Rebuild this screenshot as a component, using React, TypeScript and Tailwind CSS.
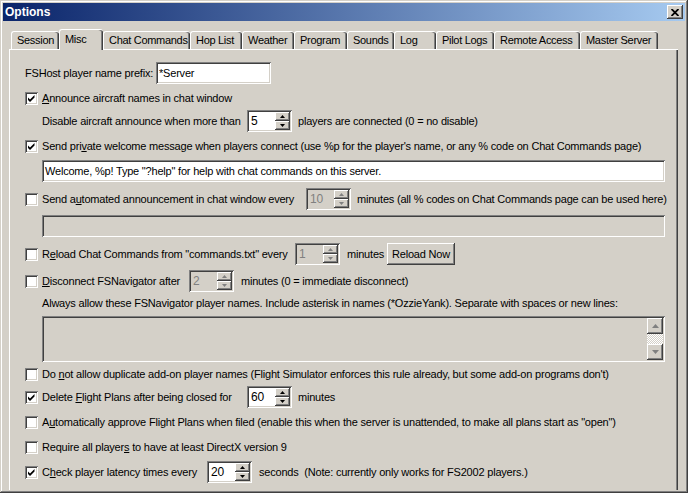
import React from "react";

const sunk =
  "shadow-[inset_1px_1px_#808080,inset_-1px_-1px_#ffffff,inset_2px_2px_#404040,inset_-2px_-2px_#d4d0c8]";
const raised =
  "bg-[#d4d0c8] shadow-[inset_-1px_-1px_#404040,inset_1px_1px_#ffffff,inset_-2px_-2px_#808080,inset_2px_2px_#d4d0c8]";

function Check({ checked }: { checked?: boolean }) {
  return (
    <div className={`w-[13px] h-[13px] shrink-0 bg-white ${sunk}`}>
      {checked && (
        <svg width="13" height="13" viewBox="0 0 13 13">
          <path d="M3 5.5 L5 7.5 L9.5 3 L9.5 5.5 L5 10 L3 8 Z" fill="#000" />
        </svg>
      )}
    </div>
  );
}

function Arrow({ up, disabled, big }: { up?: boolean; disabled?: boolean; big?: boolean }) {
  const c = disabled ? "#808080" : "#000";
  if (big) {
    return (
      <svg width="7" height="4" viewBox="0 0 7 4">
        <path d={up ? "M3.5 0 L7 4 L0 4 Z" : "M0 0 L7 0 L3.5 4 Z"} fill={c} />
      </svg>
    );
  }
  return (
    <svg width="5" height="3" viewBox="0 0 5 3">
      <path d={up ? "M2.5 0 L5 3 L0 3 Z" : "M0 0 L5 0 L2.5 3 Z"} fill={c} />
    </svg>
  );
}

function Spin({ value, disabled }: { value: string; disabled?: boolean }) {
  return (
    <div
      className={`w-[45px] h-[22px] shrink-0 flex p-[2px] ${sunk} ${
        disabled ? "bg-[#d4d0c8] text-[#808080]" : "bg-white text-black"
      }`}
    >
      <div className="flex-1 pl-[2px] text-[12px] leading-[18px]">{value}</div>
      <div className="w-[15px] flex flex-col">
        <div className={`h-[9px] flex items-center justify-center ${raised}`}>
          <Arrow up disabled={disabled} />
        </div>
        <div className={`h-[9px] flex items-center justify-center ${raised}`}>
          <Arrow disabled={disabled} />
        </div>
      </div>
    </div>
  );
}

function Tab({ label, w, active }: { label: string; w: number; active?: boolean }) {
  return (
    <div
      style={{ width: w }}
      className={`shrink-0 whitespace-nowrap overflow-hidden tracking-[-0.3px] bg-[#d4d0c8] rounded-t-[3px] pl-[5px] border-l border-t border-white shadow-[inset_-1px_0_#404040,inset_-2px_0_#808080] ${
        active ? "h-[21px] -mb-px relative z-10 pt-[1px] leading-[17px]" : "h-[18px] leading-[17px]"
      }`}
    >
      {label}
    </div>
  );
}

const tabs: [string, number][] = [
  ["Session", 48],
  ["Misc", 44],
  ["Chat Commands", 87],
  ["Hop List", 52],
  ["Weather", 52],
  ["Program", 53],
  ["Sounds", 47],
  ["Log", 42],
  ["Pilot Logs", 58],
  ["Remote Access", 86],
  ["Master Server", 78],
];

function CheckRow({
  checked,
  children,
  mt,
}: {
  checked?: boolean;
  children: React.ReactNode;
  mt: string;
}) {
  return (
    <div className={`flex items-center h-[16px] ${mt}`}>
      <Check checked={checked} />
      <span className="ml-[4px] whitespace-nowrap">{children}</span>
    </div>
  );
}

export default function App() {
  return (
    <div className="w-[688px] h-[493px] overflow-hidden bg-[#d4d0c8] p-[3px] flex flex-col font-['Liberation_Sans',Arial,sans-serif] text-[11px] tracking-[-0.2px] text-black shadow-[inset_-1px_-1px_#404040,inset_1px_1px_#d4d0c8,inset_-2px_-2px_#808080,inset_2px_2px_#ffffff]">
      {/* title bar */}
      <div className="h-[18px] shrink-0 flex items-center justify-between pl-[2px] pr-[2px] bg-[linear-gradient(to_right,#0a246a,#a6caf0)]">
        <span className="text-white font-bold text-[12px] tracking-normal">Options</span>
        <div className={`w-[16px] h-[14px] flex items-center justify-center ${raised}`}>
          <svg width="8" height="7" viewBox="0 0 8 7">
            <path d="M0.5 0 L7.5 7 M7.5 0 L0.5 7" stroke="#000" strokeWidth="1.8" />
          </svg>
        </div>
      </div>

      <div className="flex-1 flex flex-col pl-[6px] pt-[8px]">
        {/* tabs */}
        <div className="h-[20px] flex items-end ml-[2px]">
          {tabs.map(([l, w]) => (
            <Tab key={l} label={l} w={w} active={l === "Misc"} />
          ))}
        </div>

        {/* panel */}
        <div className="w-[669px] flex-1 border-l border-t border-white shadow-[inset_-1px_0_#404040,inset_-2px_0_#808080] pl-[15px] pt-[12px]">
          <div className="flex items-center h-[22px]">
            <span className="w-[131px] whitespace-nowrap">FSHost player name prefix:</span>
            <div className={`w-[115px] h-[22px] bg-white pl-[3px] leading-[22px] ${sunk}`}>*Server</div>
          </div>

          <CheckRow checked mt="mt-[6px]">
            <u>A</u>nnounce aircraft names in chat window
          </CheckRow>

          <div className="flex items-center h-[22px] mt-[4px] pl-[17px]">
            <span className="w-[205px] whitespace-nowrap">Disable aircraft announce when more than</span>
            <Spin value="5" />
            <span className="ml-[6px] whitespace-nowrap">players are connected (0 = no disable)</span>
          </div>

          <CheckRow checked mt="mt-[6px]">
            Send pri<u>v</u>ate welcome message when players connect (use %p for the player's name, or any % code on
            Chat Commands page)
          </CheckRow>

          <div className="mt-[6px] ml-[17px]">
            <div className={`w-[623px] h-[22px] bg-white pl-[3px] leading-[22px] whitespace-nowrap ${sunk}`}>
              Welcome, %p! Type "?help" for help with chat commands on this server.
            </div>
          </div>

          <div className="flex items-center h-[22px] mt-[6px]">
            <Check />
            <span className="ml-[4px] w-[264px] whitespace-nowrap">
              Send a<u>u</u>tomated announcement in chat window every
            </span>
            <Spin value="10" disabled />
            <span className="ml-[6px] whitespace-nowrap">minutes (all % codes on Chat Commands page can be used here)</span>
          </div>

          <div className="mt-[5px] ml-[17px]">
            <div className={`w-[623px] h-[22px] bg-[#d4d0c8] ${sunk}`} />
          </div>

          <div className="flex items-center h-[22px] mt-[6px]">
            <Check />
            <span className="ml-[4px] w-[253px] whitespace-nowrap">
              R<u>e</u>load Chat Commands from "commands.txt" every
            </span>
            <Spin value="1" disabled />
            <span className="ml-[7px] w-[40px] whitespace-nowrap">minutes</span>
            <div className={`w-[68px] h-[22px] flex items-center justify-center ${raised}`}>Reload Now</div>
          </div>

          <div className="flex items-center h-[22px] mt-[5px]">
            <Check />
            <span className="ml-[4px] w-[147px] whitespace-nowrap">
              <u>D</u>isconnect FSNavigator after
            </span>
            <Spin value="2" disabled />
            <span className="ml-[7px] whitespace-nowrap">minutes (0 = immediate disconnect)</span>
          </div>

          <div className="flex items-center h-[16px] mt-[3px] pl-[17px] whitespace-nowrap">
            Always allow these FSNavigator player names. Include asterisk in names (*OzzieYank). Separate with spaces or
            new lines:
          </div>

          <div className="mt-[5px] ml-[17px]">
            <div className={`w-[623px] h-[46px] bg-[#d4d0c8] p-[2px] flex justify-end ${sunk}`}>
              <div className="w-[16px] flex flex-col">
                <div className={`h-[16px] flex items-center justify-center ${raised}`}>
                  <Arrow up disabled big />
                </div>
                <div className="flex-1 bg-[repeating-conic-gradient(#ffffff_0_25%,#d4d0c8_0_50%)] bg-[length:2px_2px]" />
                <div className={`h-[16px] flex items-center justify-center ${raised}`}>
                  <Arrow disabled big />
                </div>
              </div>
            </div>
          </div>

          <CheckRow mt="mt-[4px]">
            Do <u>n</u>ot allow duplicate add-on player names (Flight Simulator enforces this rule already, but some
            add-on programs don't)
          </CheckRow>

          <div className="flex items-center h-[22px] mt-[4px]">
            <Check checked />
            <span className="ml-[4px] w-[205px] whitespace-nowrap">
              Delete <u>F</u>light Plans after being closed for
            </span>
            <Spin value="60" />
            <span className="ml-[6px] whitespace-nowrap">minutes</span>
          </div>

          <CheckRow mt="mt-[6px]">
            A<u>u</u>tomatically approve Flight Plans when filed (enable this when the server is unattended, to make all
            plans start as "open")
          </CheckRow>

          <CheckRow mt="mt-[9px]">
            Require all player<u>s</u> to have at least DirectX version 9
          </CheckRow>

          <div className="flex items-center h-[22px] mt-[6px]">
            <Check checked />
            <span className="ml-[4px] w-[165px] whitespace-nowrap">
              C<u>h</u>eck player latency times every
            </span>
            <Spin value="20" />
            <span className="ml-[7px] whitespace-pre">seconds  (Note: currently only works for FS2002 players.)</span>
          </div>
        </div>
      </div>
    </div>
  );
}
